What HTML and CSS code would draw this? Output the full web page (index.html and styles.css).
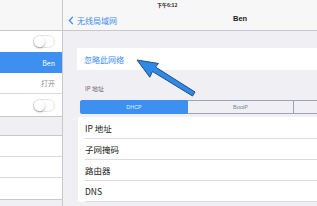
FILE: index.html
```html
<!DOCTYPE html>
<html>
<head>
<meta charset="utf-8">
<link rel="stylesheet" href="styles.css">
</head>
<body>
<div class="screen">
  <div class="master">
    <div class="m-head"></div>
    <div class="m-row"><span class="switch"><span class="knob"></span></span></div>
    <div class="m-row sel"><span class="val-w">Ben</span></div>
    <div class="m-row line"><span class="val">打开</span></div>
    <div class="m-row tall"><span class="switch"><span class="knob"></span></span></div>
    <div class="m-gap"></div>
    <div class="m-row line"></div>
    <div class="m-row line"></div>
    <div class="m-row"></div>
    <div class="m-foot"></div>
  </div>
  <div class="detail">
    <div class="status">下午6:12</div>
    <div class="nav">
      <div class="back"><svg class="chev" viewBox="0 0 6 10" width="6" height="9"><path d="M5 1 L1.3 5 L5 9" fill="none" stroke="#3a8ef0" stroke-width="1.5"/></svg><span>无线局域网</span></div>
      <div class="title">Ben</div>
    </div>
    <div class="content">
      <div class="card"><span class="forget">忽略此网络</span></div>
      <div class="sec-label">IP 地址</div>
      <div class="seg">
        <div class="seg-item on">DHCP</div>
        <div class="seg-item">BootP</div>
        <div class="seg-item"></div>
      </div>
      <div class="list">
        <div class="li">IP 地址</div>
        <div class="li">子网掩码</div>
        <div class="li">路由器</div>
        <div class="li">DNS</div>
      </div>
    </div>
  </div>
  <svg class="arrow" width="317" height="206" viewBox="0 0 317 206">
    <path d="M137 60 L158.5 63.5 L155.5 67 L195 92 L192.5 96 L152.5 71.5 L149.8 77.2 Z" fill="#2d8ae8" stroke="#2b4c78" stroke-width="1" stroke-linejoin="round"/>
  </svg>
</div>
</body>
</html>
```
FILE: styles.css
```css
* { box-sizing: border-box; }
html, body { margin: 0; padding: 0; }
body {
  width: 317px;
  height: 206px;
  overflow: hidden;
  background: #efeff4;
  font-family: "Noto Sans CJK SC", "Liberation Sans", sans-serif;
}
.screen {
  position: relative;
  display: flex;
  width: 317px;
  height: 206px;
  overflow: hidden;
}
.master {
  width: 63px;
  flex: none;
  display: flex;
  flex-direction: column;
  background: #efeff4;
  border-right: 1px solid #c8c7cc;
}
.m-head {
  height: 31px;
  background: #f7f7f8;
  border-bottom: 1px solid #c8c7cc;
}
.m-row {
  height: 21px;
  background: #fff;
  display: flex;
  align-items: center;
  justify-content: flex-end;
  padding-right: 7px;
}
.m-row.line { border-bottom: 1px solid #d9d9de; }
.m-row.tall { height: 23px; border-bottom: 1px solid #c8c7cc; }
.m-row.sel { background: #3d8ff0; }
.m-gap { height: 19px; border-bottom: 1px solid #c8c7cc; }
.m-foot { flex: 1; border-top: 1px solid #c8c7cc; }
.val { font-size: 7px; color: #8e8e93; }
.val-w { font-size: 7px; color: #fff; }
.switch {
  position: relative;
  width: 22px;
  height: 13px;
  border-radius: 7px;
  border: 1px solid #e3e3e6;
  background: #fff;
}
.knob {
  position: absolute;
  left: 0;
  top: 0;
  width: 11px;
  height: 11px;
  border-radius: 50%;
  background: #fff;
  box-shadow: 0 1px 2px rgba(0,0,0,0.35);
}
.detail {
  flex: 1;
  display: flex;
  flex-direction: column;
  overflow: hidden;
}
.status {
  height: 11px;
  background: #f7f7f8;
  font-size: 5px;
  font-weight: bold;
  color: #222;
  line-height: 10px;
  padding-left: 94px;
}
.nav {
  height: 20px;
  background: #f7f7f8;
  border-bottom: 1px solid #c8c7cc;
  display: flex;
  align-items: center;
  position: relative;
  padding-left: 5px;
}
.back {
  display: flex;
  align-items: center;
  gap: 3px;
  color: #3a8ef0;
  font-size: 8px;
}
.title {
  position: absolute;
  left: 170px;
  top: 3px;
  font-size: 7.5px;
  font-weight: bold;
  color: #222;
  font-family: "Liberation Sans", sans-serif;
}
.content {
  display: flex;
  flex-direction: column;
  padding-top: 17px;
}
.card {
  margin-left: 14px;
  height: 22px;
  background: #fff;
  display: flex;
  align-items: center;
  padding-left: 7px;
}
.forget { color: #3a8ef0; font-size: 8px; }
.sec-label {
  margin-top: 14px;
  margin-left: 22px;
  font-size: 6px;
  color: #6d6d72;
  height: 10px;
  line-height: 10px;
}
.seg {
  margin-top: 6px;
  margin-left: 17px;
  display: flex;
  height: 14px;
  width: 320px;
  flex: none;
}
.seg-item {
  width: 106px;
  flex: none;
  border: 1px solid #9aa6b8;
  border-left: none;
  font-size: 5.5px;
  color: #6f86a8;
  display: flex;
  align-items: center;
  justify-content: center;
  font-family: "Liberation Sans", "Noto Sans CJK SC", sans-serif;
}
.seg-item:first-child { border-left: 1px solid #3d8ff0; }
.seg-item.on {
  width: 108px;
  background: #3d8ff0;
  border-color: #3d8ff0;
  color: #dfeeff;
  border-radius: 2px 0 0 2px;
}
.list {
  margin-top: 3px;
  margin-left: 15px;
  background: #fff;
  display: flex;
  flex-direction: column;
  padding-top: 1px;
}
.li {
  height: 21px;
  margin-left: 7px;
  border-bottom: 1px solid #dcdce0;
  display: flex;
  align-items: center;
  font-size: 8.5px;
  color: #222;
}
.arrow {
  position: absolute;
  left: 0;
  top: 0;
  pointer-events: none;
}
```
